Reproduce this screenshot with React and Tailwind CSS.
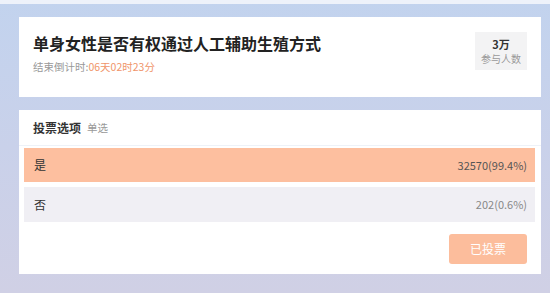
import React from "react";

const options = [
  { label: "是", value: "32570(99.4%)", voted: true },
  { label: "否", value: "202(0.6%)", voted: false },
];

export default function App() {
  return (
    <div
      className="w-[550px] h-[293px] overflow-hidden bg-gradient-to-b from-[#c2d3ee] via-[#c9d1ea] to-[#d0d0e5] flex flex-col"
      style={{ fontFamily: '"Noto Sans CJK SC", "Noto Sans", sans-serif' }}
    >
      {/* top strip */}
      <div className="h-[4px] bg-[#eef2fa]" />

      {/* title card */}
      <div className="mt-[13px] ml-[19px] w-[522px] h-[80px] bg-white flex justify-between px-[14px]">
        <div className="flex flex-col pt-[14px]">
          <div className="text-[16px] leading-[24px] font-bold text-[#222]">
            单身女性是否有权通过人工辅助生殖方式
          </div>
          <div className="mt-[5px] text-[10.5px] leading-[14px] text-[#999]">
            结束倒计时:<span className="text-[#f0956a]">06天02时23分</span>
          </div>
        </div>
        <div className="mt-[15px] w-[52px] h-[38px] bg-[#f3f3f4] flex flex-col items-center justify-center gap-[1px]">
          <div className="text-[11px] leading-[13px] font-bold text-[#333]">3万</div>
          <div className="text-[10px] leading-[13px] text-[#999]">参与人数</div>
        </div>
      </div>

      {/* vote card */}
      <div className="mt-[13px] ml-[19px] w-[522px] h-[164px] bg-white flex flex-col">
        <div className="h-[36px] flex items-center gap-[6px] px-[14px] border-b border-[#eef2f8]">
          <span className="text-[12px] font-bold text-[#333]">投票选项</span>
          <span className="text-[10.5px] text-[#999]">单选</span>
        </div>
        <div className="flex flex-col gap-[5px] mt-[2px] ml-[5px] mr-[6px]">
          {options.map((o) => (
            <div
              key={o.label}
              className={
                o.voted
                  ? "h-[34px] bg-[#fdbf9f] flex items-center justify-between pl-[10px] pr-[8px]"
                  : "h-[35px] bg-[#f0eff4] flex items-center justify-between pl-[10px] pr-[8px]"
              }
            >
              <span className="text-[12px] text-[#333]">{o.label}</span>
              <span className={o.voted ? "text-[11px] text-[#555]" : "text-[11px] text-[#888]"}>
                {o.value}
              </span>
            </div>
          ))}
        </div>
        <div className="flex justify-end pr-[14px] mt-[12px]">
          <div className="w-[78px] h-[30px] bg-[#fcbd9c] rounded-[3px] flex items-center justify-center text-[12px] text-white">
            已投票
          </div>
        </div>
      </div>
    </div>
  );
}
